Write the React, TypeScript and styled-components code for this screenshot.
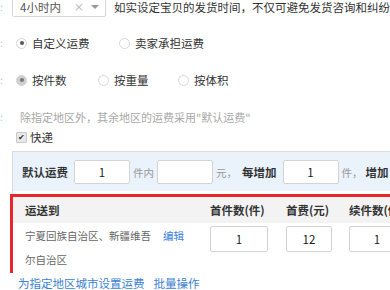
import React from "react";
import styled, { createGlobalStyle } from "styled-components";

const Global = createGlobalStyle`
  html, body {
    margin: 0;
    padding: 0;
    background: #fff;
    overflow: hidden;
  }
  body {
    font-family: "Noto Sans CJK SC", "Liberation Sans", sans-serif;
    font-size: 11.5px;
    color: #333;
  }
`;

const Page = styled.div`
  width: 390px;
  height: 290px;
  overflow: hidden;
`;

const TopRow = styled.div`
  display: flex;
  align-items: flex-end;
  height: 17px;
  white-space: nowrap;
`;

const Field = styled.div<{ h: number; gap?: number }>`
  display: flex;
  align-items: center;
  height: ${p => p.h}px;
  margin-top: ${p => p.gap ?? 0}px;
  white-space: nowrap;
`;

const Colon = styled.span<{ up?: boolean }>`
  width: 12px;
  flex: none;
  color: #a9cdf2;
  font-size: 10px;
  line-height: 10px;
  align-self: ${p => (p.up ? "flex-start" : "center")};
  margin-top: ${p => (p.up ? 2 : 0)}px;
`;

const SelectBox = styled.div`
  width: 127px;
  height: 23px;
  border: 1px solid #d8d8d8;
  border-radius: 2px;
  box-sizing: border-box;
  display: flex;
  align-items: center;
  padding: 3px 6px 0 7px;
  color: #555;
  font-size: 11.5px;
`;

const SelectText = styled.span`
  flex: 1;
  line-height: 12px;
`;

const Clear = styled.span`
  color: #aaa;
  font-size: 10px;
  line-height: 10px;
  margin-right: 7px;
`;

const Caret = styled.span`
  width: 0;
  height: 0;
  border-left: 4px solid transparent;
  border-right: 4px solid transparent;
  border-top: 4px solid #999;
`;

const Note = styled.span`
  margin-left: 8px;
  align-self: flex-start;
  margin-top: 1px;
  line-height: 12px;
  color: #333;
`;

const Radio = styled.span<{ on?: boolean; dark?: boolean }>`
  width: 9px;
  height: 9px;
  border-radius: 50%;
  border: 1px solid #d6d6d6;
  background: ${p => (p.dark ? "#cfcfcf" : "#fff")};
  display: inline-flex;
  align-items: center;
  justify-content: center;
  margin: 0 5px 0 4px;
  flex: none;
  &::after {
    content: "";
    display: ${p => (p.on ? "block" : "none")};
    width: 4px;
    height: 4px;
    border-radius: 50%;
    background: ${p => (p.dark ? "#777" : "#555")};
  }
`;

const Option = styled.label<{ w: number }>`
  display: inline-flex;
  align-items: center;
  width: ${p => p.w}px;
`;

const Hint = styled.span`
  color: #a8a8a8;
  margin-left: 8px;
  font-size: 11px;
`;

const Check = styled.span`
  width: 9px;
  height: 9px;
  border: 1px solid #c8c8c8;
  background: #e8e8e8;
  border-radius: 1px;
  margin: 0 3px 0 16px;
  display: inline-flex;
  align-items: center;
  justify-content: center;
  font-size: 8px;
  line-height: 1;
  color: #333;
`;

const Panel = styled.div`
  margin-left: 12px;
  margin-top: 6px;
  border: 1px solid #dcdcdc;
  border-right: none;
  border-bottom: none;
  width: 400px;
`;

const Defaults = styled.div`
  background: #eaf2fc;
  border-top: 1px solid #f2f2f2;
  height: 38px;
  display: flex;
  align-items: center;
  padding-left: 9px;
  white-space: nowrap;
`;

const Strong = styled.span<{ lead?: number }>`
  font-weight: bold;
  color: #333;
  margin-left: ${p => p.lead ?? 0}px;
  margin-right: 6px;
`;

const Unit = styled.span`
  color: #999;
  font-size: 10.5px;
  margin: 0 3px 0 3px;
`;

const Input = styled.span<{ w: number }>`
  display: inline-flex;
  align-items: center;
  justify-content: center;
  width: ${p => p.w}px;
  height: 24px;
  box-sizing: border-box;
  background: #fff;
  border: 1px solid #d4d4d4;
  border-radius: 2px;
  font-size: 11.5px;
  color: #222;
  flex: none;
`;

const Region = styled.div`
  margin-left: -3px;
  margin-top: 3px;
  border: 3px solid #e8262c;
  border-right: none;
  height: 79px;
  box-sizing: border-box;
`;

const Cols = styled.div<{ head?: boolean }>`
  display: grid;
  grid-template-columns: 185px 76px 63px 60px;
  align-items: center;
  background: ${p => (p.head ? "#f3f3f3" : "#fff")};
  height: ${p => (p.head ? 26 : 50)}px;
  padding-left: 12px;
  font-weight: ${p => (p.head ? "bold" : "normal")};
  white-space: nowrap;
`;

const Places = styled.div`
  color: #666;
  font-size: 10.5px;
  line-height: 24px;
  align-self: start;
  padding-top: 1px;
`;

const Edit = styled.span`
  color: #3b7fd6;
  margin-left: 12px;
`;

const Links = styled.div`
  display: flex;
  gap: 9px;
  padding: 2px 0 0 18px;
  line-height: 16px;
  color: #3b7fd6;
  white-space: nowrap;
`;

const CellInput = styled(Input)`
  align-self: start;
  margin-top: 3px;
  height: 26px;
`;

export default function App() {
  return (
    <Page>
      <Global />
      <TopRow>
        <Colon up>:</Colon>
        <SelectBox>
          <SelectText>4小时内</SelectText>
          <Clear>×</Clear>
          <Caret />
        </SelectBox>
        <Note>如实设定宝贝的发货时间，不仅可避免发货咨询和纠纷</Note>
      </TopRow>
      <Field h={52}>
        <Colon>:</Colon>
        <Option w={103}>
          <Radio on />
          自定义运费
        </Option>
        <Option w={110}>
          <Radio />
          卖家承担运费
        </Option>
      </Field>
      <Field h={22}>
        <Colon>:</Colon>
        <Option w={82}>
          <Radio on dark />
          按件数
        </Option>
        <Option w={80}>
          <Radio />
          按重量
        </Option>
        <Option w={80}>
          <Radio />
          按体积
        </Option>
      </Field>
      <Field h={16} gap={18}>
        <Colon>:</Colon>
        <Hint>除指定地区外，其余地区的运费采用"默认运费"</Hint>
      </Field>
      <Field h={16} gap={4}>
        <Check>✔</Check>
        快递
      </Field>
      <Panel>
        <Defaults>
          <Strong>默认运费</Strong>
          <Input w={56}>1</Input>
          <Unit>件内</Unit>
          <Input w={56}></Input>
          <Unit>元，</Unit>
          <Strong lead={2}>每增加</Strong>
          <Input w={56}>1</Input>
          <Unit>件，</Unit>
          <Strong lead={0}>增加</Strong>
        </Defaults>
        <Region>
          <Cols head>
            <span>运送到</span>
            <span>首件数(件)</span>
            <span>首费(元)</span>
            <span>续件数(件)</span>
          </Cols>
          <Cols>
            <Places>
              宁夏回族自治区、新疆维吾<Edit>编辑</Edit>
              <br />
              尔自治区
            </Places>
            <CellInput w={58}>1</CellInput>
            <CellInput w={46}>12</CellInput>
            <CellInput w={56}>1</CellInput>
          </Cols>
        </Region>
      </Panel>
      <Links>
        <span>为指定地区城市设置运费</span>
        <span>批量操作</span>
      </Links>
    </Page>
  );
}
